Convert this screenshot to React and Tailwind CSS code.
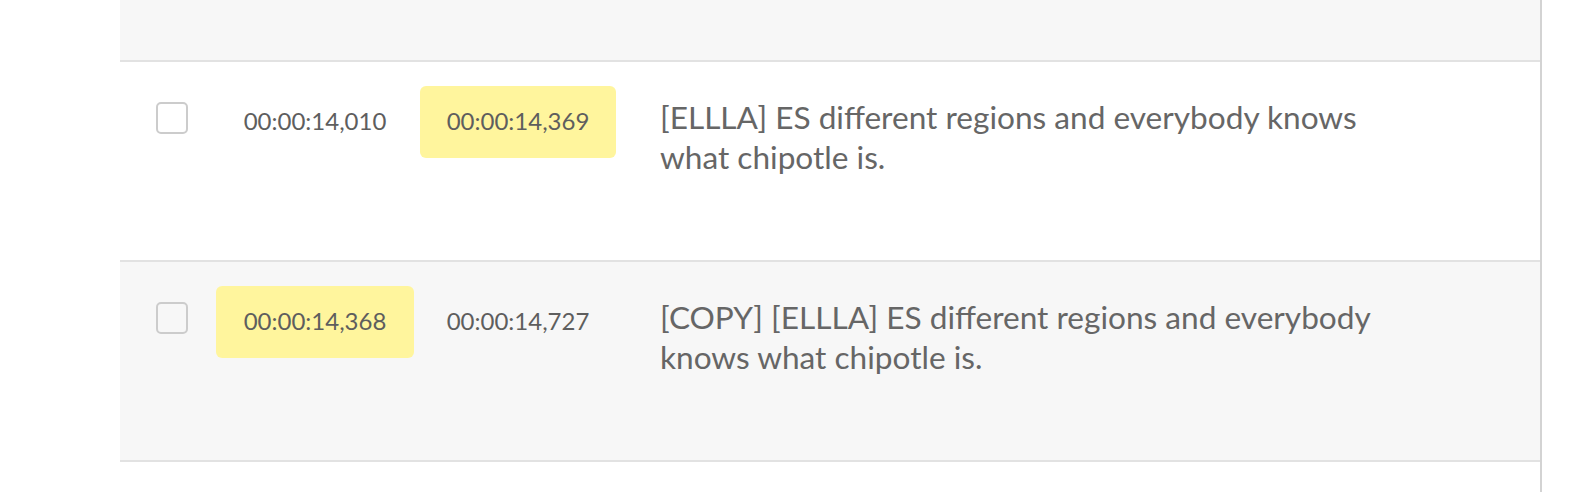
import React from "react";

const rows = [
  {
    start: "00:00:14,010",
    end: "00:00:14,369",
    highlight: "end",
    text: "[ELLLA] ES different regions and everybody knows what chipotle is.",
    bg: "bg-white",
  },
  {
    start: "00:00:14,368",
    end: "00:00:14,727",
    highlight: "start",
    text: "[COPY] [ELLLA] ES different regions and everybody knows what chipotle is.",
    bg: "bg-[#f7f7f7]",
  },
];

const Time = ({ value, active, className }) => (
  <div
    className={`flex h-[72px] items-center justify-center rounded-[6px] pb-[3px] text-[24px] text-[#5e5e5e] ${
      active ? "bg-[#fff59d]" : ""
    } ${className}`}
  >
    {value}
  </div>
);

const App = () => {
  return (
    <div
      className="flex h-[492px] w-[1596px] bg-white"
      style={{ fontFamily: "Lato, 'Open Sans', sans-serif" }}
    >
      <div className="ml-[120px] flex w-[1422px] flex-col border-r-2 border-[#d3d3d3]">
        <div className="h-[62px] shrink-0 border-b-2 border-[#e2e2e2] bg-[#f7f7f7]" />
        {rows.map((row, i) => (
          <div
            key={i}
            className={`flex h-[200px] shrink-0 items-start border-b-2 border-[#e2e2e2] pt-6 ${row.bg}`}
          >
            <div className="ml-9 mt-4 h-8 w-8 shrink-0 rounded-[5px] border-2 border-[#cccccc]" />
            <Time
              value={row.start}
              active={row.highlight === "start"}
              className="ml-7 w-[198px] shrink-0"
            />
            <Time
              value={row.end}
              active={row.highlight === "end"}
              className="ml-[6px] w-[196px] shrink-0"
            />
            <p className="ml-[44px] mt-[11px] w-[740px] text-[31.6px] leading-[40px] text-[#666666]">
              {row.text}
            </p>
          </div>
        ))}
      </div>
    </div>
  );
};

export default App;
